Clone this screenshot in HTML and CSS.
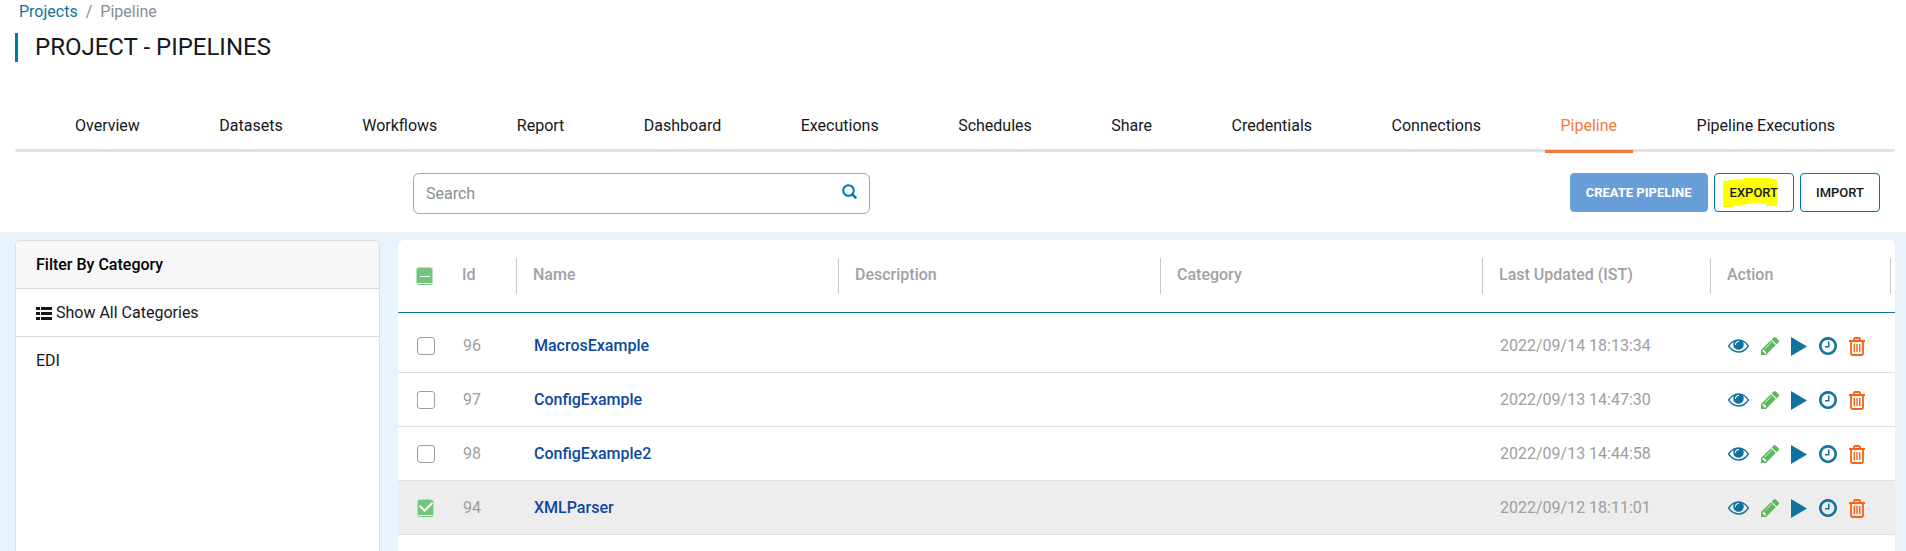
FILE: index.html
```html
<!DOCTYPE html>
<html lang="en">
<head>
<meta charset="utf-8">
<title>Project - Pipelines</title>
<link rel="stylesheet" href="styles.css">
</head>
<body>
<svg class="sprite" aria-hidden="true">
  <symbol id="eye" viewBox="0 384 1792 1152"><path d="M1664 960q-152-236-381-353 61 104 61 225 0 185-131.500 316.500t-316.500 131.500-316.500-131.500-131.500-316.500q0-121 61-225-229 117-381 353 133 205 333.500 326.500t434.500 121.500 434.500-121.500 333.500-326.500zm-720-384q0-20-14-34t-34-14q-125 0-214.500 89.500t-89.500 214.500q0 20 14 34t34 14 34-14 14-34q0-86 61-147t147-61q20 0 34-14t14-34zm848 384q0 34-20 69-140 230-376.500 368.500t-499.500 138.500-499.500-139-376.500-368q-20-35-20-69t20-69q140-229 376.500-368t499.500-139 499.500 139 376.500 368q20 35 20 69z"/></symbol>
  <symbol id="pencil" viewBox="128 149 1515 1515"><path d="M491 1536l91-91-235-235-91 91v107h128v128h107zm523-928q0-22-22-22-10 0-17 7l-542 542q-7 7-7 17 0 22 22 22 10 0 17-7l542-542q7-7 7-17zm-54-192l416 416-832 832h-416v-416zm683 96q0 53-37 90l-166 166-416-416 166-165q36-38 90-38 53 0 91 38l235 234q37 39 37 91z"/></symbol>
  <symbol id="play" viewBox="0 0 16 19"><path d="M0 0L16 9.500 0 19z"/></symbol>
  <symbol id="clock" viewBox="128 128 1536 1536"><path d="M1024 544v448q0 14-9 23t-23 9h-320q-14 0-23-9t-9-23v-64q0-14 9-23t23-9h224v-352q0-14 9-23t23-9h64q14 0 23 9t9 23zm416 352q0-148-73-273t-198-198-273-73-273 73-198 198-73 273 73 273 198 198 273 73 273-73 198-198 73-273zm224 0q0 209-103 385.500t-279.500 279.500-385.500 103-385.500-103-279.500-279.500-103-385.500 103-385.500 279.500-279.500 385.500-103 385.500 103 279.500 279.500 103 385.500z"/></symbol>
  <symbol id="trash" viewBox="0 0 16 19"><g fill="none" stroke="currentColor"><path stroke-width="1.800" d="M0 4h16M5 4V2.200Q5 1 6.200 1h3.600Q11 1 11 2.200V4M2 4v12.200Q2 18 3.800 18h8.400Q14 18 14 16.200V4"/><path stroke-width="1.400" d="M5.300 7v8M8 7v8M10.700 7v8"/></g></symbol>
</svg>
<header class="page-head">
  <nav class="breadcrumb" aria-label="Breadcrumb"><a href="#">Projects</a><span>/</span><span>Pipeline</span></nav>
  <h1 class="title">PROJECT - PIPELINES</h1>
</header>
<nav class="tabs" aria-label="Project sections">
  <a class="tab" href="#">Overview</a>
  <a class="tab" href="#">Datasets</a>
  <a class="tab" href="#">Workflows</a>
  <a class="tab" href="#">Report</a>
  <a class="tab" href="#">Dashboard</a>
  <a class="tab" href="#">Executions</a>
  <a class="tab" href="#">Schedules</a>
  <a class="tab" href="#">Share</a>
  <a class="tab" href="#">Credentials</a>
  <a class="tab" href="#">Connections</a>
  <a class="tab tab-active" href="#" aria-current="page">Pipeline</a>
  <a class="tab" href="#">Pipeline Executions</a>
</nav>
<div class="toolbar">
  <div class="search">
    <input class="search-input" type="text" placeholder="Search" aria-label="Search">
    <button class="search-button" type="button" aria-label="Search"><svg width="15" height="15" viewBox="0 0 15 15" fill="none" stroke="currentColor" stroke-width="2"><circle cx="6.500" cy="6.500" r="5.300"/><path stroke-width="2.400" d="M10.300 10.300L14.200 14.200"/></svg></button>
  </div>
  <div class="actions">
    <button class="btn btn-primary" type="button">CREATE PIPELINE</button>
    <button class="btn btn-marked" type="button"><svg class="marker" width="54" height="29" viewBox="0 0 54 29" aria-hidden="true"><path fill="#ff0" d="M0 3h6V2h8V1h7V0h28v1h5v27H43v-2h-4v-1H28v1h-6v1h-7v1h-5v1H0z"/></svg><span class="btn-text">EXPORT</span></button>
    <button class="btn" type="button">IMPORT</button>
  </div>
</div>
<main class="content">
  <aside class="filter">
    <h2 class="filter-head">Filter By Category</h2>
    <a class="filter-item" href="#"><svg width="16" height="13" viewBox="0 0 16 13" aria-hidden="true"><path fill="currentColor" d="M0 0h4v3H0zM5 0h11v3H5zM0 5h4v3H0zM5 5h11v3H5zM0 10h4v3H0zM5 10h11v3H5z"/></svg>Show All Categories</a>
    <a class="filter-item filter-last" href="#">EDI</a>
  </aside>
  <section class="panel">
    <table class="grid">
      <colgroup><col class="col-check"><col class="col-id"><col><col><col><col class="col-date"><col class="col-action"></colgroup>
      <thead>
        <tr>
          <th><input class="check check-some" type="checkbox" aria-label="Select all"></th>
          <th><div class="label label-id">Id</div></th>
          <th><div class="label">Name</div></th>
          <th><div class="label">Description</div></th>
          <th><div class="label">Category</div></th>
          <th><div class="label">Last Updated (IST)</div></th>
          <th class="cell-end"><div class="label">Action</div></th>
        </tr>
      </thead>
      <tbody>
        <tr class="spacer"><td colspan="7"></td></tr>
        <tr>
          <td><input class="check" type="checkbox" aria-label="Select 96"></td><td class="id">96</td><td><a class="name" href="#">MacrosExample</a></td><td></td><td></td><td>2022/09/14 18:13:34</td>
          <td><div class="icons"><button class="icon eye" type="button" aria-label="View"><svg><use href="#eye"/></svg></button><button class="icon pencil" type="button" aria-label="Edit"><svg><use href="#pencil"/></svg></button><button class="icon play" type="button" aria-label="Run"><svg><use href="#play"/></svg></button><button class="icon clock" type="button" aria-label="Schedule"><svg><use href="#clock"/></svg></button><button class="icon trash" type="button" aria-label="Delete"><svg><use href="#trash"/></svg></button></div></td>
        </tr>
        <tr>
          <td><input class="check" type="checkbox" aria-label="Select 97"></td><td class="id">97</td><td><a class="name" href="#">ConfigExample</a></td><td></td><td></td><td>2022/09/13 14:47:30</td>
          <td><div class="icons"><button class="icon eye" type="button" aria-label="View"><svg><use href="#eye"/></svg></button><button class="icon pencil" type="button" aria-label="Edit"><svg><use href="#pencil"/></svg></button><button class="icon play" type="button" aria-label="Run"><svg><use href="#play"/></svg></button><button class="icon clock" type="button" aria-label="Schedule"><svg><use href="#clock"/></svg></button><button class="icon trash" type="button" aria-label="Delete"><svg><use href="#trash"/></svg></button></div></td>
        </tr>
        <tr>
          <td><input class="check" type="checkbox" aria-label="Select 98"></td><td class="id">98</td><td><a class="name" href="#">ConfigExample2</a></td><td></td><td></td><td>2022/09/13 14:44:58</td>
          <td><div class="icons"><button class="icon eye" type="button" aria-label="View"><svg><use href="#eye"/></svg></button><button class="icon pencil" type="button" aria-label="Edit"><svg><use href="#pencil"/></svg></button><button class="icon play" type="button" aria-label="Run"><svg><use href="#play"/></svg></button><button class="icon clock" type="button" aria-label="Schedule"><svg><use href="#clock"/></svg></button><button class="icon trash" type="button" aria-label="Delete"><svg><use href="#trash"/></svg></button></div></td>
        </tr>
        <tr class="selected">
          <td><input class="check" type="checkbox" checked aria-label="Select 94"></td><td class="id">94</td><td><a class="name" href="#">XMLParser</a></td><td></td><td></td><td>2022/09/12 18:11:01</td>
          <td><div class="icons"><button class="icon eye" type="button" aria-label="View"><svg><use href="#eye"/></svg></button><button class="icon pencil" type="button" aria-label="Edit"><svg><use href="#pencil"/></svg></button><button class="icon play" type="button" aria-label="Run"><svg><use href="#play"/></svg></button><button class="icon clock" type="button" aria-label="Schedule"><svg><use href="#clock"/></svg></button><button class="icon trash" type="button" aria-label="Delete"><svg><use href="#trash"/></svg></button></div></td>
        </tr>
      </tbody>
    </table>
  </section>
</main>
</body>
</html>
```
FILE: styles.css
```css
* { box-sizing: border-box; }
body {
  margin: 0;
  min-height: 100vh;
  display: flex;
  flex-direction: column;
  font: 16px/24px Roboto, sans-serif;
  color: #14181b;
  background: #fff;
}
a { color: inherit; text-decoration: none; }
button { font: inherit; color: inherit; cursor: pointer; }
.sprite { display: none; }

.page-head { padding: 0 15px; }
.breadcrumb { display: flex; gap: 8px; padding-left: 4px; color: #868e96; }
.breadcrumb a { color: #10749f; }
.title {
  margin: 9px 0 0;
  padding-left: 17px;
  border-left: 3px solid #0077b6;
  font-size: 24px;
  line-height: 29px;
  font-weight: 400;
}

.tabs {
  display: flex;
  justify-content: space-between;
  margin: 44px 11px 0 15px;
  padding: 0 44px;
  border-bottom: 3px solid #dee2e6;
  border-radius: 3px;
}
.tab {
  padding: 8px 16px 12px;
  margin-bottom: -4px;
  border-bottom: 3px solid transparent;
  font-weight: 400;
}
.tab-active { color: #f5793b; border-color: #f5793b; }

.toolbar {
  display: flex;
  justify-content: space-between;
  align-items: flex-start;
  padding: 21px 26px 18px 413px;
}
.search { display: flex; width: 457px; height: 41px; border: 1px solid #a3a5a8; border-radius: 6px; }
.search-input { flex: 1; min-width: 0; padding: 0 12px; border: 0; outline: 0; background: none; font: inherit; }
.search-input::placeholder { color: #868e96; opacity: 1; }
.search-button { display: flex; padding: 10px 12px; border: 0; background: none; color: #0074b7; }
.actions { display: flex; gap: 6px; }
.btn {
  position: relative;
  height: 39px;
  padding: 0 15px;
  border: 1px solid #0074b7;
  border-radius: 4px;
  background: #fff;
  font-size: 13px;
  line-height: 20px;
  font-weight: 500;
}
.btn-primary { border-color: #689eda; background: #689eda; color: #fff; font-weight: 700; }
.marker { position: absolute; left: 8px; top: 4px; }
.btn-text { position: relative; }

.content {
  flex: 1;
  display: grid;
  grid-template-columns: 365px 1fr;
  gap: 18px;
  padding: 8px 11px 0 15px;
  background: #e8f3fe;
}
.filter { border: 1px solid #dcdee0; border-bottom: 0; border-radius: 5px 5px 0 0; background: #fff; }
.filter-head { margin: 0; padding: 12px 20px 11px; border-bottom: 1px solid #d8d8d8; border-radius: 4px 4px 0 0; background: #f7f7f7; color: #000; font-size: 16px; line-height: 24px; font-weight: 500; }
.filter-item { display: flex; align-items: center; gap: 4px; padding: 12px 20px 11px; border-bottom: 1px solid #dcdcdc; }
.filter-last { border-bottom: 0; }

.panel { border-radius: 6px 6px 0 0; background: #fff; }
.grid { width: 100%; table-layout: fixed; border-collapse: separate; border-spacing: 0; text-align: left; color: #9e9e9e; }
.col-check { width: 46px; }
.col-id { width: 73px; }
.col-date { width: 228px; }
.col-action { width: 184px; }
th { height: 73px; padding: 0; border-bottom: 1px solid #10749f; color: #a0a1a5; font-weight: 500; }
.label { height: 36px; padding-left: 16px; border-right: 1px solid #c8c8c8; line-height: 34px; }
.label-id { padding-left: 18px; }
.cell-end { padding-right: 4px; }
td { height: 54px; padding: 0 0 0 17px; border-bottom: 1px solid #dedede; }
.spacer td { height: 6px; padding: 0; border: 0; }
th:first-child { padding-left: 18px; }
td:first-child { padding-left: 19px; }
.id { padding-left: 19px; }
.name { color: #0d47a1; font-weight: 500; }
.selected td { background: #ededed; }

.check {
  display: block;
  appearance: none;
  width: 18px;
  height: 18px;
  margin: 0;
  border: 1px solid #9e9e9e;
  border-radius: 3px;
  background: #fff;
}
.check:checked, .check-some {
  display: grid;
  place-items: center;
  width: 17px;
  border-color: #b9e0bd;
  border-bottom-color: #74c47c;
  background: linear-gradient(#74c47c 15px, #fff 15px);
}
.check:checked::after { content: ""; width: 10px; height: 6px; border: solid #fff; border-width: 0 0 2px 2px; transform: rotate(-45deg); margin-bottom: 5px; }
.check-some::after { content: ""; width: 10px; height: 1px; background: #fff; }

.icons { display: flex; align-items: center; gap: 12px; padding-top: 1px; }
.icon { display: flex; padding: 0; border: 0; background: none; color: #12729f; }
.icon svg { display: block; width: 18px; height: 18px; fill: currentColor; }
.eye svg { width: 21px; height: 14px; }
.play svg { width: 16px; height: 19px; }
.trash svg { width: 16px; height: 19px; }
.pencil { color: #5cb85c; }
.trash { color: #f96212; }
```
